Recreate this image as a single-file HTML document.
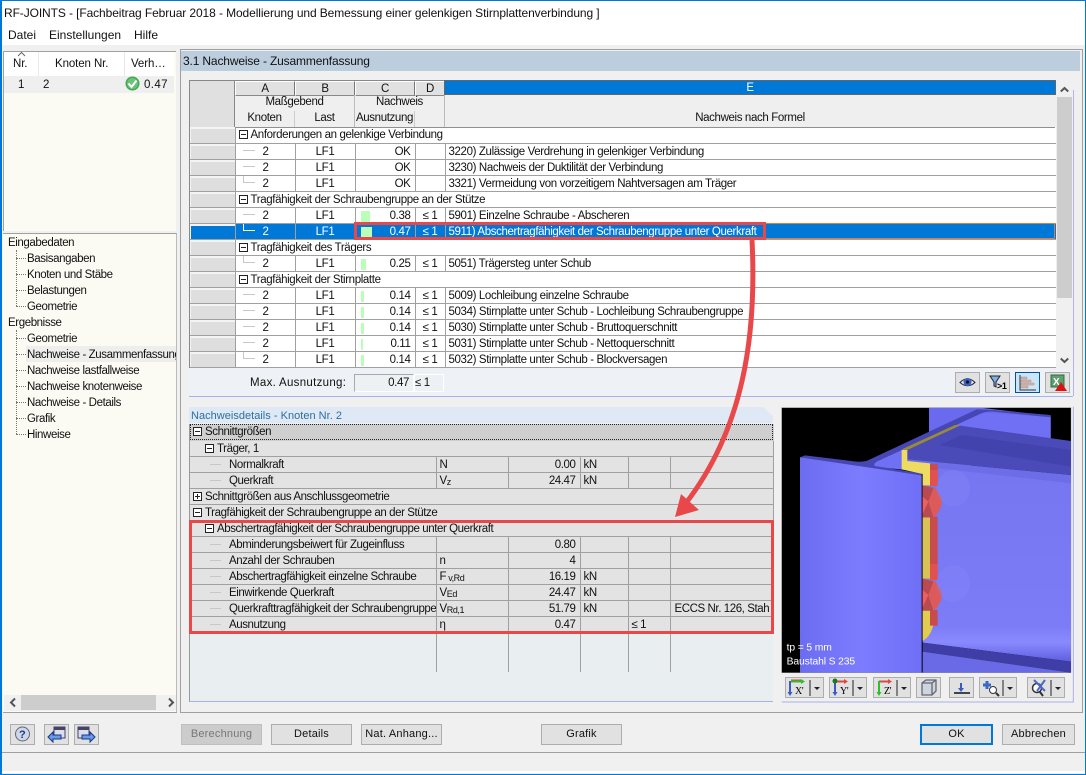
<!DOCTYPE html>
<html><head><meta charset="utf-8"><style>
html,body{margin:0;padding:0}
body{width:1086px;height:775px;position:relative;overflow:hidden;background:#f0f0f0;font:11.5px/16px "Liberation Sans",sans-serif;letter-spacing:-.37px;color:#111}
.a{position:absolute;white-space:nowrap}
.t{font-size:12px;letter-spacing:0}
.u{font-size:11.5px;letter-spacing:-.1px}
table{position:absolute;border-collapse:collapse;table-layout:fixed;font-size:11.5px;letter-spacing:-.37px}
td{padding:2px 0 0;height:16px;box-sizing:border-box;line-height:13px;border-bottom:1px solid #a0a0a0;border-right:1px solid #a0a0a0;white-space:nowrap;overflow:hidden}
.c{text-align:center}.r{text-align:right;padding-right:4px}
#g td{background:#fff}
#g td.h{background:#dedede;box-shadow:inset 1px 2px 0 #f4f4f4}
#g tr.s td{background:#0078d7;color:#fff}
#g tr.s td.h{background:#0078d7}
.m{display:inline-block;width:7px;height:7px;border:1px solid #222;position:relative;vertical-align:-1px;margin:0 3px 0 3px;background:#fff}
.m:before{content:"";position:absolute;left:1px;top:3px;width:5px;height:1px;background:#222}
.p:after{content:"";position:absolute;left:3px;top:1px;width:1px;height:5px;background:#222}
.l{display:inline-block;position:relative;width:12px;height:1px;background:#c8c8c8;vertical-align:4px;margin:0 0 0 7px}
.e:before{content:"";position:absolute;left:0;top:-8px;width:1px;height:8px;background:inherit}
.n2{margin-left:8px}
.bar{display:inline-block;height:11px;background:#b9ffb9;float:left;margin:1px 0 0 5px}
.btn{position:absolute;box-sizing:border-box;height:21px;background:#e1e1e1;border:1px solid #adadad;text-align:center;line-height:19px;font-size:11px;letter-spacing:.2px}
.ib{position:absolute;box-sizing:border-box;height:21px;width:25px;background:#e1e1e1;border:1px solid #adadad}
.ib svg{position:absolute;left:0;top:0}
#d{letter-spacing:-.42px}
#d td{background:#e3e3e3;padding-top:1px;line-height:14px}
#d td.n{padding-left:39px;overflow:hidden;background:linear-gradient(#c8c8c8,#c8c8c8) no-repeat 20px 7px/11px 1px #e3e3e3}
sub{font-size:9px;line-height:0;vertical-align:-1px}
.dl{position:absolute;border-left:1px dotted #777}
.dh{position:absolute;border-top:1px dotted #777;width:10px}
.tr{position:absolute;left:27px;font-size:11.5px;letter-spacing:-.4px;line-height:16px;white-space:nowrap;margin-top:1px}
.v{position:absolute;top:632px;height:40px;width:1px;background:#a0a0a0}
.hc{line-height:14px;background:#e1e1e1;border:1px solid;border-color:#fff #777 #888 #fff;height:13px}
</style></head><body>
<!-- window frame -->
<div class="a" style="left:0;top:0;width:1086px;height:1px;background:#0078d7"></div>
<div class="a" style="left:0;top:0;width:2px;height:775px;background:#0078d7"></div>
<div class="a" style="left:1085px;top:0;width:1px;height:775px;background:#0078d7"></div>
<div class="a" style="left:0;top:774px;width:1086px;height:1px;background:#0078d7"></div>
<div class="a" style="left:2px;top:1px;width:1083px;height:44px;background:#fff"></div>
<div class="a" style="left:4px;top:5px;font-size:12px;letter-spacing:-.1px">RF-JOINTS - [Fachbeitrag Februar 2018 - Modellierung und Bemessung einer gelenkigen Stirnplattenverbindung ]</div>
<div class="a t" style="left:8px;top:27px">Datei</div><div class="a t" style="left:49px;top:27px">Einstellungen</div><div class="a t" style="left:134px;top:27px">Hilfe</div>

<!-- left top panel -->
<div class="a" style="left:3px;top:51px;width:173px;height:180px;background:#fbfaf3;border-top:1px solid #a0a0a0;border-left:1px solid #a0a0a0;box-sizing:border-box"></div>
<div class="a" style="left:4px;top:52px;width:170px;height:24px;background:#fff"></div>
<div class="a" style="left:38px;top:52px;width:1px;height:24px;background:#e8e8e8"></div>
<div class="a" style="left:124px;top:52px;width:1px;height:24px;background:#e8e8e8"></div>
<svg class="a" style="left:17px;top:51px" width="9" height="6"><path d="M1 5 4.500 1.500 8 5" fill="none" stroke="#666"/></svg>
<div class="a u" style="left:13px;top:56px">Nr.</div><div class="a u" style="left:55px;top:56px">Knoten Nr.</div><div class="a u" style="left:131px;top:56px">Verh…</div>
<div class="a" style="left:4px;top:76px;width:170px;height:17px;background:#efefef"></div>
<div class="a u" style="left:18px;top:77px">1</div><div class="a u" style="left:43px;top:77px">2</div>
<svg class="a" style="left:125px;top:76px" width="16" height="16"><circle cx="7.500" cy="7.500" r="7" fill="#43a856"/><circle cx="7.500" cy="7.500" r="5.500" fill="#6cc276"/><path d="M3.500 7.500 6.500 11 11.500 4.500" fill="none" stroke="#fff" stroke-width="2"/></svg>
<div class="a u" style="left:144px;top:77px;letter-spacing:.4px">0.47</div>

<!-- navigator -->
<div class="a" style="left:3px;top:233px;width:174px;height:480px;background:#fbfaf3;border-top:1px solid #a0a0a0;border-right:1px solid #bbb;box-sizing:border-box"></div>
<div class="a" style="left:26px;top:346px;width:150px;height:16px;background:#eeeeec"></div>
<div class="tr" style="left:8px;top:234px">Eingabedaten</div>
<div class="tr" style="top:250px">Basisangaben</div><div class="tr" style="top:266px">Knoten und Stäbe</div><div class="tr" style="top:282px">Belastungen</div><div class="tr" style="top:298px">Geometrie</div>
<div class="tr" style="left:8px;top:314px">Ergebnisse</div>
<div class="tr" style="top:330px">Geometrie</div>
<div class="tr" style="top:346px;width:149px;overflow:hidden">Nachweise - Zusammenfassung</div>
<div class="tr" style="top:362px">Nachweise lastfallweise</div><div class="tr" style="top:378px">Nachweise knotenweise</div><div class="tr" style="top:394px">Nachweise - Details</div><div class="tr" style="top:410px">Grafik</div><div class="tr" style="top:426px">Hinweise</div>
<div class="dl" style="left:16px;top:250px;height:56px"></div>
<div class="dh" style="left:16px;top:258px"></div><div class="dh" style="left:16px;top:274px"></div><div class="dh" style="left:16px;top:290px"></div><div class="dh" style="left:16px;top:306px"></div>
<div class="dl" style="left:16px;top:330px;height:104px"></div>
<div class="dh" style="left:16px;top:338px"></div><div class="dh" style="left:16px;top:354px"></div><div class="dh" style="left:16px;top:370px"></div><div class="dh" style="left:16px;top:386px"></div><div class="dh" style="left:16px;top:402px"></div><div class="dh" style="left:16px;top:418px"></div><div class="dh" style="left:16px;top:434px"></div>
<div class="a" style="left:4px;top:695px;width:172px;height:16px;background:#f0f0f0"></div>
<div class="a" style="left:21px;top:695px;width:135px;height:15px;background:#cdcdcd"></div>
<svg class="a" style="left:8px;top:697px" width="170" height="11"><path d="M7 1.500 3 5.500 7 9.500M161 1.500 165 5.500 161 9.500" fill="none" stroke="#555" stroke-width="2"/></svg>
<div class="a" style="left:3px;top:712px;width:174px;height:1px;background:#a0a0a0"></div>

<!-- main frame -->
<div class="a" style="left:180px;top:49px;width:903px;height:664px;box-sizing:border-box;border:1px solid #a0a0a0"></div>
<div class="a" style="left:181px;top:51px;width:899px;height:20px;background:#bccddd"></div>
<div class="a" style="left:183px;top:53px;font-size:12px;letter-spacing:-.15px">3.1 Nachweise - Zusammenfassung</div>

<!-- results grid -->
<div class="a" style="left:189px;top:80px;width:867px;height:288px;box-sizing:border-box;border-left:1px solid #888;border-top:1px solid #888;background:#efefef"></div>
<div class="a" style="left:190px;top:81px;width:44px;height:46px;background:#e0e0e0;border-right:1px solid #888;border-bottom:1px solid #888"></div>
<div class="a c hc" style="left:235px;top:81px;width:58px">A</div>
<div class="a c hc" style="left:295px;top:81px;width:58px">B</div>
<div class="a c hc" style="left:355px;top:81px;width:58px">C</div>
<div class="a c hc" style="left:415px;top:81px;width:28px">D</div>
<div class="a c" style="left:445px;top:81px;width:610px;height:13px;line-height:14px;background:#0078d7;color:#fff;outline:1px solid #666">E</div>
<div class="a" style="left:354px;top:95px;width:1px;height:32px;background:#bbb"></div>
<div class="a" style="left:444px;top:95px;width:1px;height:32px;background:#bbb"></div>
<div class="a" style="left:294px;top:111px;width:1px;height:16px;background:#ccc"></div>
<div class="a" style="left:414px;top:111px;width:1px;height:16px;background:#ccc"></div>
<div class="a c" style="left:235px;top:94px;width:119px">Maßgebend</div><div class="a c" style="left:355px;top:94px;width:89px">Nachweis</div>
<div class="a c" style="left:235px;top:110px;width:59px">Knoten</div><div class="a c" style="left:295px;top:110px;width:59px">Last</div><div class="a c" style="left:355px;top:110px;width:59px">Ausnutzung</div>
<div class="a c" style="left:445px;top:110px;width:610px">Nachweis nach Formel</div>
<table id="g" style="left:190px;top:127px;width:866px">
<colgroup><col style="width:45px"><col style="width:60px"><col style="width:60px"><col style="width:60px"><col style="width:30px"><col style="width:611px"></colgroup>
<tr><td class="h"></td><td colspan="5"><i class="m"></i>Anforderungen an gelenkige Verbindung</td></tr>
<tr><td class="h"></td><td><i class="l"></i><span class="n2">2</span></td><td class="c">LF1</td><td class="r">OK</td><td></td><td style="padding-left:3px">3220) Zulässige Verdrehung in gelenkiger Verbindung</td></tr>
<tr><td class="h"></td><td><i class="l"></i><span class="n2">2</span></td><td class="c">LF1</td><td class="r">OK</td><td></td><td style="padding-left:3px">3230) Nachweis der Duktilität der Verbindung</td></tr>
<tr><td class="h"></td><td><i class="l e"></i><span class="n2">2</span></td><td class="c">LF1</td><td class="r">OK</td><td></td><td style="padding-left:3px">3321) Vermeidung von vorzeitigem Nahtversagen am Träger</td></tr>
<tr><td class="h"></td><td colspan="5"><i class="m"></i>Tragfähigkeit der Schraubengruppe an der Stütze</td></tr>
<tr><td class="h"></td><td><i class="l"></i><span class="n2">2</span></td><td class="c">LF1</td><td class="r"><i class="bar" style="width:9px"></i>0.38</td><td class="c">≤ 1</td><td style="padding-left:3px">5901) Einzelne Schraube - Abscheren</td></tr>
<tr class="s"><td class="h"></td><td><i class="l e" style="background:#fff"></i><span class="n2">2</span></td><td class="c">LF1</td><td class="r"><i class="bar" style="width:11px"></i>0.47</td><td class="c">≤ 1</td><td style="padding-left:3px">5911) Abschertragfähigkeit der Schraubengruppe unter Querkraft</td></tr>
<tr><td class="h"></td><td colspan="5"><i class="m"></i>Tragfähigkeit des Trägers</td></tr>
<tr><td class="h"></td><td><i class="l e"></i><span class="n2">2</span></td><td class="c">LF1</td><td class="r"><i class="bar" style="width:5px"></i>0.25</td><td class="c">≤ 1</td><td style="padding-left:3px">5051) Trägersteg unter Schub</td></tr>
<tr><td class="h"></td><td colspan="5"><i class="m"></i>Tragfähigkeit der Stirnplatte</td></tr>
<tr><td class="h"></td><td><i class="l"></i><span class="n2">2</span></td><td class="c">LF1</td><td class="r"><i class="bar" style="width:3px"></i>0.14</td><td class="c">≤ 1</td><td style="padding-left:3px">5009) Lochleibung einzelne Schraube</td></tr>
<tr><td class="h"></td><td><i class="l"></i><span class="n2">2</span></td><td class="c">LF1</td><td class="r"><i class="bar" style="width:3px"></i>0.14</td><td class="c">≤ 1</td><td style="padding-left:3px">5034) Stirnplatte unter Schub - Lochleibung Schraubengruppe</td></tr>
<tr><td class="h"></td><td><i class="l"></i><span class="n2">2</span></td><td class="c">LF1</td><td class="r"><i class="bar" style="width:3px"></i>0.14</td><td class="c">≤ 1</td><td style="padding-left:3px">5030) Stirnplatte unter Schub - Bruttoquerschnitt</td></tr>
<tr><td class="h"></td><td><i class="l"></i><span class="n2">2</span></td><td class="c">LF1</td><td class="r"><i class="bar" style="width:2px"></i>0.11</td><td class="c">≤ 1</td><td style="padding-left:3px">5031) Stirnplatte unter Schub - Nettoquerschnitt</td></tr>
<tr><td class="h"></td><td><i class="l e"></i><span class="n2">2</span></td><td class="c">LF1</td><td class="r"><i class="bar" style="width:3px"></i>0.14</td><td class="c">≤ 1</td><td style="padding-left:3px">5032) Stirnplatte unter Schub - Blockversagen</td></tr>
</table>
<div class="a" style="left:235px;top:127px;width:820px;height:1px;background:#909090"></div>
<!-- grid scrollbar -->
<div class="a" style="left:1056px;top:81px;width:16px;height:287px;background:#f0f0f0"></div>
<div class="a" style="left:1057px;top:97px;width:15px;height:201px;background:#cdcdcd"></div>
<svg class="a" style="left:1060px;top:86px" width="9" height="7"><path d="M.8 5.500 4.500 2 8.200 5.500" fill="none" stroke="#555" stroke-width="2"/></svg>
<svg class="a" style="left:1060px;top:357px" width="9" height="7"><path d="M.8 1.500 4.500 5 8.200 1.500" fill="none" stroke="#555" stroke-width="2"/></svg>
<div class="a" style="left:1073px;top:90px;width:1px;height:306px;background:#b4b4ea"></div>

<!-- max area -->
<div class="a" style="left:189px;top:368px;width:884px;height:28px;background:#eef2f6;border-bottom:1px solid #aab0ea"></div>
<div class="a" style="left:250px;top:375px;letter-spacing:.3px">Max. Ausnutzung:</div>
<div class="a r" style="left:354px;top:374px;width:54px;height:16px;background:#edf1f3;border:1px solid;border-color:#aaa #fff #fff #aaa">0.47</div>
<div class="a" style="left:414px;top:374px;width:28px;height:16px;background:#edf1f3;border:1px solid #fff">≤ 1</div>
<div class="ib" style="left:955px;top:372px"><svg width="23" height="19"><path d="M4 9.500Q11.500 2 19 9.500 11.500 16 4 9.500Z" fill="#dfe6ff" stroke="#223"/><circle cx="11.500" cy="9" r="4" fill="#3c62c8"/><circle cx="11.500" cy="9" r="1.600" fill="#111"/></svg></div>
<div class="ib" style="left:985px;top:372px"><svg width="23" height="19"><path d="M4 3H14L10 9V14L8 13V9Z" fill="#7fb0e8" stroke="#223"/><text x="11" y="16" font-size="9" font-weight="bold" font-family="Liberation Sans">&gt;1</text></svg></div>
<div class="ib" style="left:1015px;top:372px;background:#cce4f7;border-color:#005499"><svg width="23" height="19"><path d="M4 2V17H20" fill="none" stroke="#333"/><path d="M5 4H11V6H5ZM5 7H15V9H5ZM5 10H18V12H5ZM5 13H12V15H5Z" fill="#efaaaa" stroke="#8a9a8a" stroke-width=".5"/></svg></div>
<div class="ib" style="left:1045px;top:372px"><svg width="23" height="19"><rect x="5" y="2" width="13" height="12" fill="#5f9f6f" stroke="#2d6d3d"/><text x="7" y="12" font-size="10" font-weight="bold" fill="#fff" font-family="Liberation Sans">X</text><path d="M15 9 21 18H9Z" fill="#e01010"/></svg></div>

<!-- details -->
<div class="a" style="left:189px;top:407px;width:584px;height:16px;background:#dfe8f5;clip-path:polygon(0 0,574px 0,100% 9px,100% 100%,0 100%)"></div>
<div class="a" style="left:191px;top:408px;color:#2d6f9f;font-size:11px;letter-spacing:.02px">Nachweisdetails - Knoten Nr. 2</div>
<div class="a" style="left:189px;top:424px;width:584px;height:278px;background:#e9eef0;border-left:1px solid #999;box-sizing:border-box;border-bottom:1px solid #aab0ea"></div>
<table id="d" style="left:190px;top:424px;width:583px">
<colgroup><col style="width:246px"><col style="width:72px"><col style="width:72px"><col style="width:48px"><col style="width:42px"><col style="width:103px"></colgroup>
<tr><td colspan="6" style="background:#cfcfcf;outline:1px dotted #222;outline-offset:-1px;border-color:#cfcfcf"><i class="m"></i>Schnittgrößen</td></tr>
<tr><td colspan="6"><span style="margin-left:12px"></span><i class="m"></i>Träger, 1</td></tr>
<tr><td class="n">Normalkraft</td><td style="padding-left:3px">N</td><td class="r">0.00</td><td style="padding-left:3px">kN</td><td></td><td></td></tr>
<tr><td class="n">Querkraft</td><td style="padding-left:3px">V<sub>z</sub></td><td class="r">24.47</td><td style="padding-left:3px">kN</td><td></td><td></td></tr>
<tr><td colspan="6"><i class="m p"></i>Schnittgrößen aus Anschlussgeometrie</td></tr>
<tr><td colspan="6"><i class="m"></i>Tragfähigkeit der Schraubengruppe an der Stütze</td></tr>
<tr><td colspan="6"><span style="margin-left:12px"></span><i class="m"></i>Abschertragfähigkeit der Schraubengruppe unter Querkraft</td></tr>
<tr><td class="n">Abminderungsbeiwert für Zugeinfluss</td><td></td><td class="r">0.80</td><td></td><td></td><td></td></tr>
<tr><td class="n">Anzahl der Schrauben</td><td style="padding-left:3px">n</td><td class="r">4</td><td></td><td></td><td></td></tr>
<tr><td class="n">Abschertragfähigkeit einzelne Schraube</td><td style="padding-left:3px">F<sub> v,Rd</sub></td><td class="r">16.19</td><td style="padding-left:3px">kN</td><td></td><td></td></tr>
<tr><td class="n">Einwirkende Querkraft</td><td style="padding-left:3px">V<sub>Ed</sub></td><td class="r">24.47</td><td style="padding-left:3px">kN</td><td></td><td></td></tr>
<tr><td class="n">Querkrafttragfähigkeit der Schraubengruppe</td><td style="padding-left:3px">V<sub>Rd,1</sub></td><td class="r">51.79</td><td style="padding-left:3px">kN</td><td></td><td style="padding-left:4px">ECCS Nr. 126, Stah</td></tr>
<tr><td class="n">Ausnutzung</td><td style="padding-left:3px">η</td><td class="r">0.47</td><td></td><td style="padding-left:3px">≤ 1</td><td></td></tr>
</table>
<div class="v" style="left:436px"></div><div class="v" style="left:508px"></div><div class="v" style="left:580px"></div><div class="v" style="left:628px"></div><div class="v" style="left:670px"></div>

<!-- 3D view -->
<svg class="a" style="left:780px;top:360px" width="306" height="350" viewBox="0 0 918 1050">
<defs><clipPath id="cv"><rect x="5" y="143" width="868" height="795"/></clipPath>
<linearGradient id="fl" x1="0" x2="1" y1="0" y2="0"><stop offset="0" stop-color="#6c6cf0"/><stop offset=".5" stop-color="#7c7cff"/><stop offset="1" stop-color="#6f6ff6"/></linearGradient>
<linearGradient id="wb" x1="0" x2="0" y1="0" y2="1"><stop offset="0" stop-color="#7676f0"/><stop offset=".82" stop-color="#7c7cf6"/><stop offset=".9" stop-color="#8a8aff"/><stop offset="1" stop-color="#5f5fe0"/></linearGradient></defs>
<rect x="5" y="143" width="868" height="795" fill="#000" stroke="#888"/>
<g clip-path="url(#cv)">
<path d="M447 143H600L812 168V262H447Z" fill="#6a6aee"/>
<path d="M270 310 600 158 812 170 812 300 380 330 280 320Z" fill="#7070f4"/>
<path d="M60 292 75 286 230 305Q250 306 262 302L590 148 640 150 812 165 812 172 640 155Q620 153 600 162L290 305Q280 312 284 318L425 340 425 346 60 298Z" fill="#4646b4"/>
<path d="M380 270 540 197 873 243V345L380 298Z" fill="#4a4ab8"/>
<path d="M480 255 545 225 873 270V320Z" fill="#4343ae"/>
<path d="M380 298 873 345V372L380 325Z" fill="#6d6de8"/>
<path d="M428 320 873 370V905L428 848Z" fill="url(#wb)"/>
<path d="M428 848 873 905V938L428 875Z" fill="#3e3ea6"/>
<path d="M428 875 873 938H428Z" fill="#6a6ae6"/>
<path d="M60 292 425 346V938H60Z" fill="url(#fl)"/>
<path d="M365 268 525 195H542L382 270Z" fill="#9a8c2e"/>
<path d="M365 270H382V303L450 310V376H428V342L365 328Z" fill="#eedb62"/>
<path d="M428 472H450V656H428Z" fill="#d8c254"/>
<path d="M428 752H450L460 795Q452 830 428 842Z" fill="#e2cc50"/>
<path d="M450 312H473V378H450ZM450 470H473V612H450ZM450 750H473V797H450Z" fill="#c84c4c"/>
<path d="M450 330H473V378H450ZM450 612H473V660H450Z" fill="#e4504e"/>
<path d="M428 376 465 384Q487 410 485 425 483 455 460 472L428 472Z" fill="#dc5a5a"/>
<path d="M428 376 460 384 445 425 460 472H428Z" fill="#b84a52"/>
<path d="M428 410 445 425 428 462Z" fill="#ee6060"/>
<path d="M428 656 465 664Q487 690 485 705 483 735 460 752L428 752Z" fill="#dc5a5a"/>
<path d="M428 656 460 664 445 705 460 752H428Z" fill="#b84a52"/>
<path d="M428 690 445 705 428 742Z" fill="#ee6060"/>
<ellipse cx="520" cy="385" rx="50" ry="55" fill="#8888ff" opacity=".3"/><ellipse cx="520" cy="670" rx="50" ry="55" fill="#8888ff" opacity=".3"/>
</g>
<text x="20" y="872" fill="#fff" font-size="31" font-family="Liberation Sans">tp = 5 mm</text>
<text x="20" y="913" fill="#fff" font-size="31" font-family="Liberation Sans">Baustahl S 235</text>
<path d="M5 1026H880V140" fill="none" stroke="#aab0ea" stroke-width="3"/>
</svg>
<!-- 3D toolbar -->
<div class="ib" style="left:785px;top:677px;width:39px"><svg width="37" height="19"><path d="M4 3V15" stroke="#3a5ac8" stroke-width="2"/><path d="M1.500 14H6.500L4 18Z" fill="#3a5ac8"/><path d="M5 2H15" stroke="#e04848"/><path d="M5 3.500H15" stroke="#2ac22a" stroke-width="2"/><path d="M15 1 19 3.500 15 6Z" fill="#2ac22a"/><text x="9" y="16" font-size="10" font-family="Liberation Serif">X'</text><path d="M24 2V18" stroke="#222"/><path d="M28 9H34L31 12Z" fill="#222"/></svg></div>
<div class="ib" style="left:829px;top:677px;width:38px"><svg width="36" height="19"><path d="M5 3.500H14" stroke="#e04848" stroke-width="2"/><path d="M14 1 18 3.500 14 6Z" fill="#e04848"/><path d="M5 3V15" stroke="#3a5ac8" stroke-width="2"/><path d="M2.500 14H7.500L5 18Z" fill="#3a5ac8"/><circle cx="5" cy="3" r="2.500" fill="#1a7a1a"/><text x="10" y="16" font-size="10" font-family="Liberation Serif">Y'</text><path d="M23 2V18" stroke="#222"/><path d="M27 9H33L30 12Z" fill="#222"/></svg></div>
<div class="ib" style="left:873px;top:677px;width:38px"><svg width="36" height="19"><path d="M5 3.500H14" stroke="#e04848" stroke-width="2"/><path d="M14 1 18 3.500 14 6Z" fill="#e04848"/><path d="M5 3V15" stroke="#2ac22a" stroke-width="2"/><path d="M2.500 14H7.500L5 18Z" fill="#2ac22a"/><text x="10" y="16" font-size="10" font-family="Liberation Serif">Z'</text><path d="M23 2V18" stroke="#222"/><path d="M27 9H33L30 12Z" fill="#222"/></svg></div>
<div class="ib" style="left:916px;top:677px"><svg width="23" height="19"><path d="M5 5 9 2H19V13L15 17H5ZM5 5H15V17M15 5 19 2" fill="#d0d4dc" stroke="#667" stroke-width="1.300"/></svg></div>
<div class="ib" style="left:949px;top:677px"><svg width="23" height="19"><path d="M4 15H20" stroke="#444" stroke-width="2"/><path d="M11 5V12" stroke="#3a5ac8" stroke-width="2"/><path d="M8 10H14L11 14Z" fill="#3a5ac8"/></svg></div>
<div class="ib" style="left:979px;top:677px;width:38px"><svg width="36" height="19"><path d="M3 7H11M7 3V11" stroke="#3a6ac8" stroke-width="3"/><circle cx="13" cy="12" r="3.500" fill="#fff" stroke="#333"/><path d="M16 15 19 18" stroke="#333" stroke-width="2"/><path d="M23 2V18" stroke="#222"/><path d="M27 9H33L30 12Z" fill="#222"/></svg></div>
<div class="ib" style="left:1027px;top:677px;width:38px"><svg width="36" height="19"><circle cx="9" cy="10" r="4.500" fill="#fff" stroke="#333" stroke-width="1.500"/><path d="M6 2 17 13M17 2 9 13" stroke="#4a6ac8" stroke-width="2"/><path d="M12 14 15 18" stroke="#333" stroke-width="2"/><path d="M23 2V18" stroke="#222"/><path d="M27 9H33L30 12Z" fill="#222"/></svg></div>

<!-- annotations -->
<div class="a" style="left:354px;top:223px;width:699px;height:14px;border:1px solid #e27a3c"></div>
<div class="a" style="left:354px;top:222px;width:406px;height:12px;border:3px solid #e8484a"></div>
<div class="a" style="left:189px;top:520px;width:579px;height:108px;border:3px solid #e8484a"></div>
<svg class="a" style="left:0;top:0;pointer-events:none" width="1086" height="775"><path d="M752 240C757 340 742 430 686 503" fill="none" stroke="#e8484a" stroke-width="5"/><path d="M675 517 681 494 699 510Z" fill="#e8484a"/></svg>

<!-- bottom -->
<div class="ib" style="left:10px;top:724px"><svg width="23" height="19"><circle cx="11.500" cy="9" r="7" fill="#cfd6e8" stroke="#667"/><text x="8" y="13" font-size="11" font-weight="bold" fill="#1a3a8a" font-family="Liberation Sans">?</text></svg></div>
<div class="ib" style="left:44px;top:724px"><svg width="23" height="19"><rect x="9" y="2" width="11" height="11" fill="#dde" stroke="#446"/><rect x="9" y="2" width="11" height="3" fill="#446"/><path d="M3 12 8 7V10H16V14H8V17Z" fill="#6a9ae8" stroke="#123a8a"/></svg></div>
<div class="ib" style="left:74px;top:724px"><svg width="23" height="19"><rect x="3" y="2" width="11" height="11" fill="#dde" stroke="#446"/><rect x="3" y="2" width="11" height="3" fill="#446"/><path d="M20 12 15 7V10H7V14H15V17Z" fill="#6a9ae8" stroke="#123a8a"/></svg></div>
<div class="btn" style="left:181px;top:724px;width:81px;background:#ccc;border-color:#bfbfbf;color:#777">Berechnung</div>
<div class="btn" style="left:271px;top:724px;width:81px">Details</div>
<div class="btn" style="left:361px;top:724px;width:81px">Nat. Anhang...</div>
<div class="btn" style="left:541px;top:724px;width:81px">Grafik</div>
<div class="btn" style="left:920px;top:724px;width:73px;border:2px solid #0078d7;line-height:17px">OK</div>
<div class="btn" style="left:1002px;top:724px;width:73px">Abbrechen</div>
<div class="a" style="left:2px;top:752px;width:1083px;height:1px;background:#a0a0a0"></div>
<div class="a" style="left:2px;top:771px;width:1083px;height:2px;background:#fff"></div>
</body></html>
